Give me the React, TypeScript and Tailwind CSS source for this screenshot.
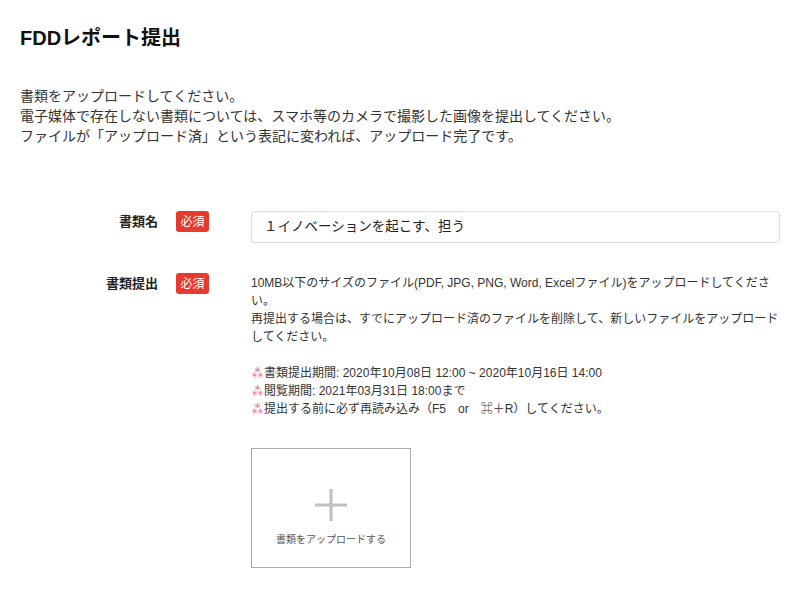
import React from 'react';

const font = { fontFamily: '"Liberation Sans", "Noto Sans CJK JP", sans-serif' };

const Required = () => (
  <span className="ml-[18px] flex h-[21px] w-[33px] shrink-0 items-center justify-center rounded-[3px] bg-[#e53a2c] text-[12px] leading-none text-white">
    必須
  </span>
);

const Note: React.FC<{ children: React.ReactNode }> = ({ children }) => (
  <div className="whitespace-nowrap">
    <span className="text-[13px] text-[#e0506a]">⁂</span>
    {children}
  </div>
);

export default function App() {
  return (
    <div className="min-h-screen bg-white px-5 text-[#333]" style={font}>
      <h1 className="pt-[25px] text-[20px] font-bold leading-[26px] text-[#111]">FDDレポート提出</h1>

      <div className="mt-[35px] text-[14px] leading-[20px]">
        <p>書類をアップロードしてください。</p>
        <p>電子媒体で存在しない書類については、スマホ等のカメラで撮影した画像を提出してください。</p>
        <p>ファイルが「アップロード済」という表記に変われば、アップロード完了です。</p>
      </div>

      <div className="mt-[65px] flex flex-col gap-[30px]">
        <div className="flex items-start">
          <div className="flex items-center">
            <div className="flex h-[21px] w-[138px] items-center justify-end text-[13px] font-bold text-[#222]">
              書類名
            </div>
            <Required />
          </div>
          <div className="ml-[42px] flex h-[32px] flex-1 items-center rounded-[3px] border border-[#ddd] px-[12px] text-[13.5px] text-[#222]">
            １イノベーションを起こす、担う
          </div>
        </div>

        <div className="flex items-start">
          <div className="flex items-center">
            <div className="flex h-[21px] w-[138px] items-center justify-end text-[13px] font-bold text-[#222]">
              書類提出
            </div>
            <Required />
          </div>
          <div className="ml-[42px] flex-1 pt-[1px] text-[12px] leading-[18px]">
            <div className="whitespace-nowrap">
              10MB以下のサイズのファイル(PDF, JPG, PNG, Word, Excelファイル)をアップロードしてくださ
            </div>
            <div>い。</div>
            <div className="whitespace-nowrap">
              再提出する場合は、すでにアップロード済のファイルを削除して、新しいファイルをアップロード
            </div>
            <div>してください。</div>
            <div className="h-[18px]" />
            <Note>書類提出期間: 2020年10月08日 12:00 ~ 2020年10月16日 14:00</Note>
            <Note>閲覧期間: 2021年03月31日 18:00まで</Note>
            <Note>提出する前に必ず再読み込み（F5　or　⌘＋R）してください。</Note>

            <div className="mt-[30px] flex h-[120px] w-[160px] flex-col items-center border border-[#aaa]">
              <svg className="mt-[40px]" width="32" height="32" viewBox="0 0 32 32">
                <rect x="14.5" y="0" width="3" height="32" fill="#c0c0c0" />
                <rect x="0" y="14.5" width="32" height="3" fill="#c0c0c0" />
              </svg>
              <div className="mt-[12px] text-[10px] leading-[14px] text-[#555]">書類をアップロードする</div>
            </div>
          </div>
        </div>
      </div>
    </div>
  );
}
